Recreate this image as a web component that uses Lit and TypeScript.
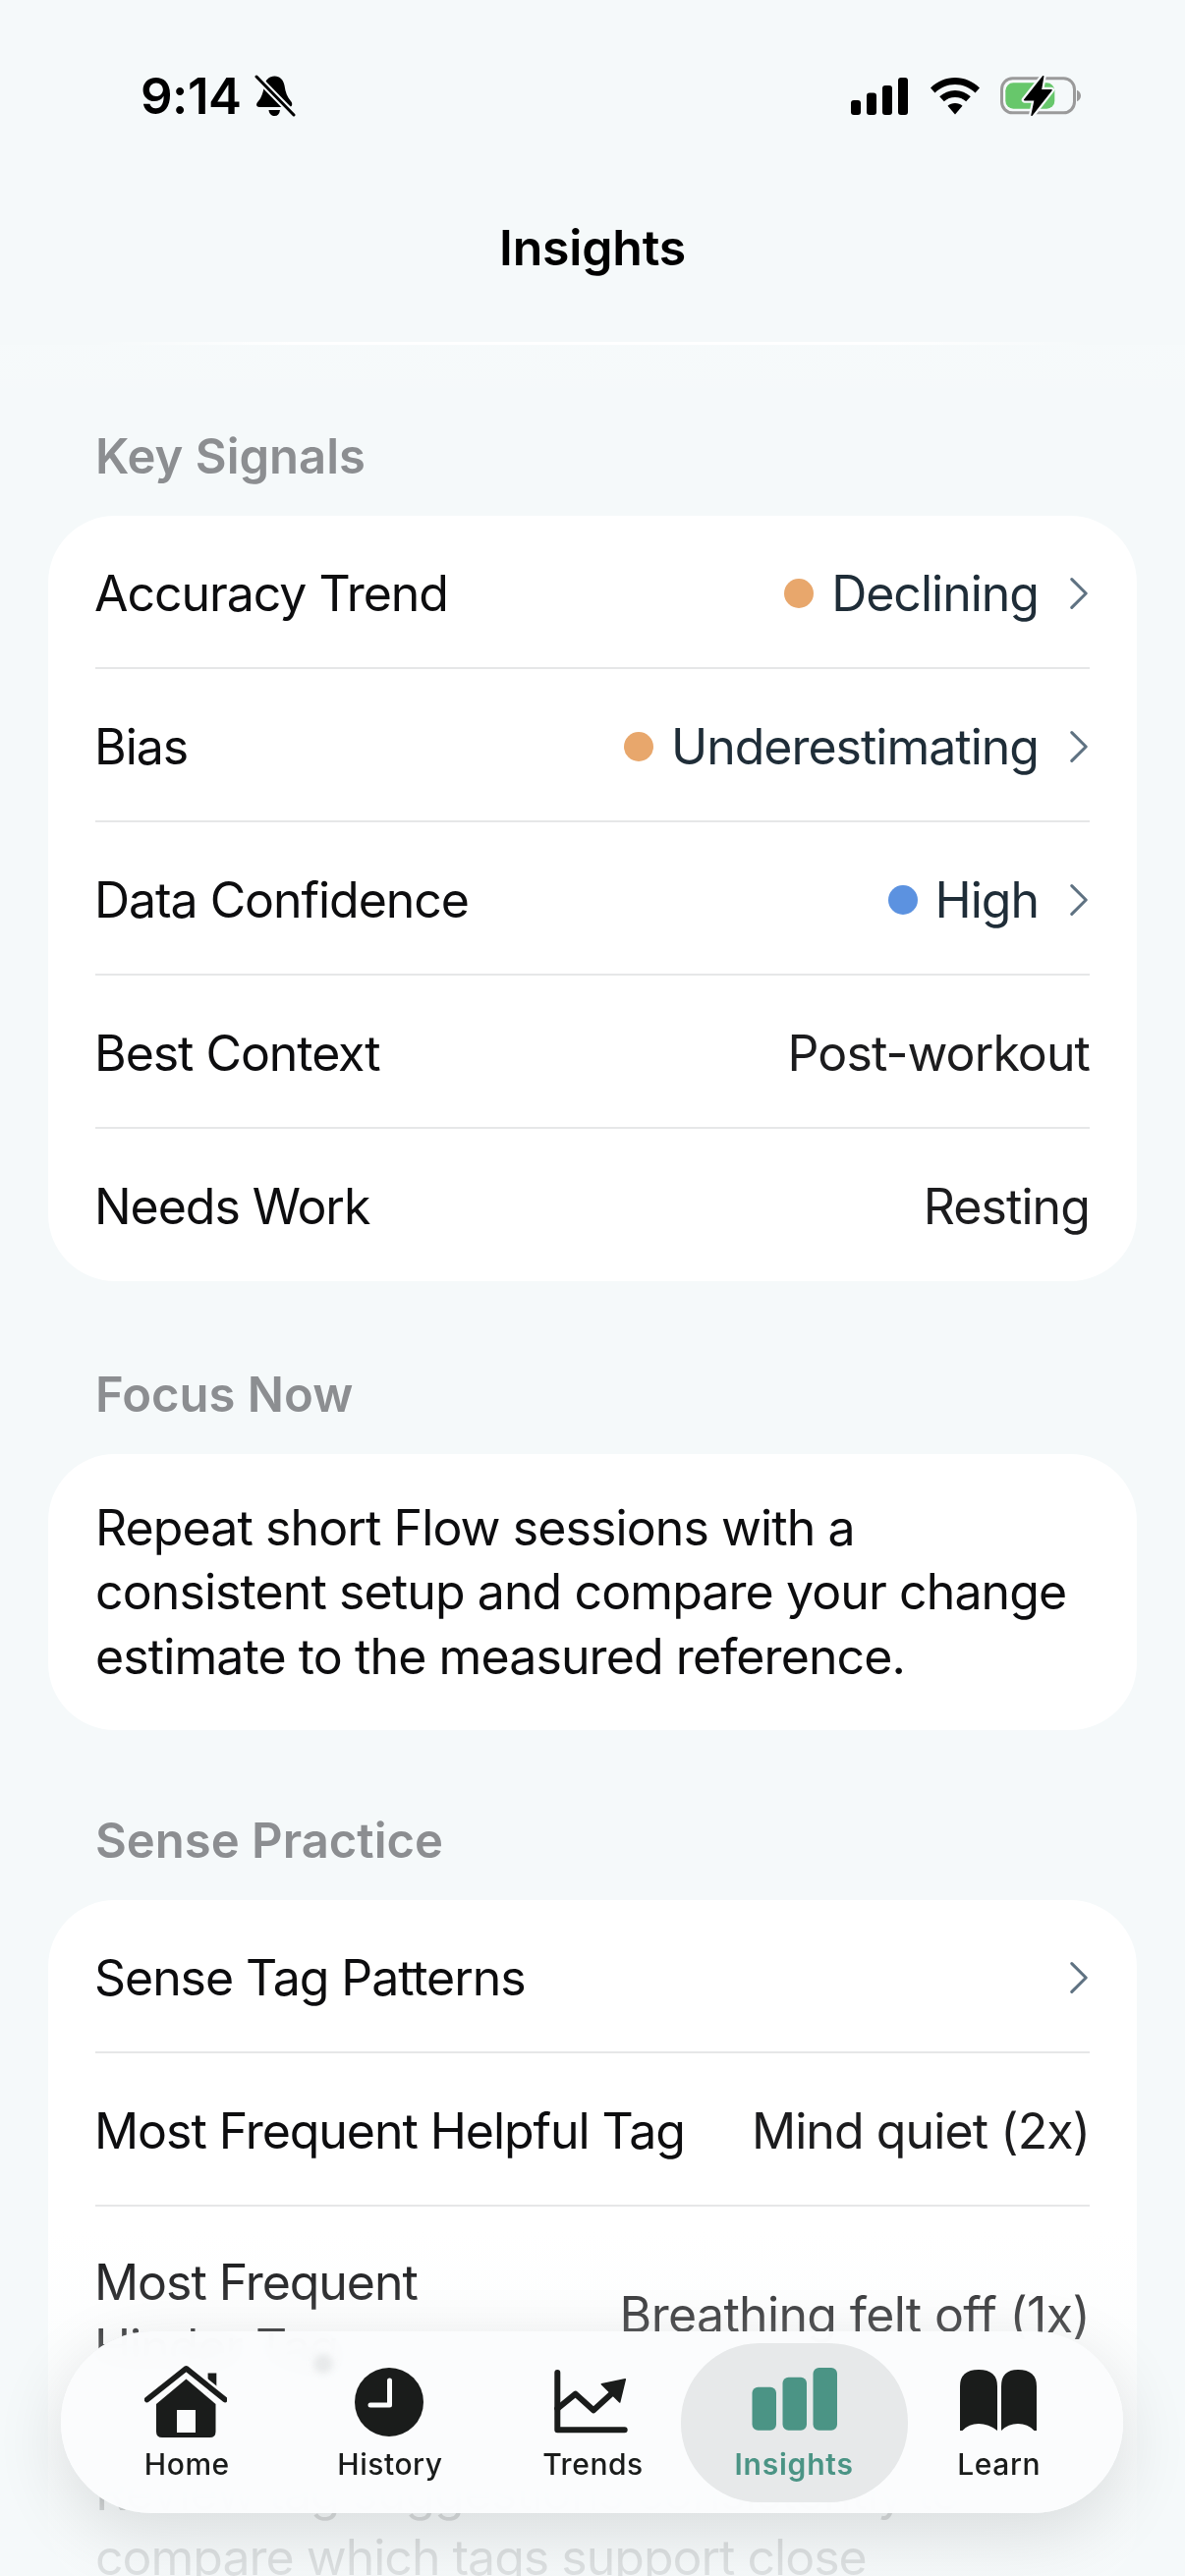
import { LitElement, html, css, svg } from "lit";
import { customElement } from "lit/decorators.js";

const chevron = html`<svg class="chev" viewBox="0 0 20 36"><path d="M2 2 L18 18 L2 34" fill="none" stroke="#5f7282" stroke-width="3.4" stroke-linecap="round" stroke-linejoin="round"/></svg>`;

type Row = { label: string; value?: string; dot?: string; chev?: boolean; cls?: string };

const keySignals: Row[] = [
  { label: "Accuracy Trend", value: "Declining", dot: "orange", chev: true },
  { label: "Bias", value: "Underestimating", dot: "orange", chev: true },
  { label: "Data Confidence", value: "High", dot: "blue", chev: true },
  { label: "Best Context", value: "Post-workout" },
  { label: "Needs Work", value: "Resting" },
];
const sense: Row[] = [
  { label: "Sense Tag Patterns", chev: true },
  { label: "Most Frequent Helpful Tag", value: "Mind quiet (2x)" },
  { label: "Most Frequent Hinder Tag", value: "Breathing felt off (1x)", cls: "tall" },
];

const homeIcon = svg`<svg class="ic" width="84" height="76" viewBox="0 0 84 76">
  <path d="M64.6 8.5h8.7v20h-8.7z" fill="#1a1c1b"/>
  <path d="M12 40 L42.5 14.5 L72.5 40 V68 Q72.5 74 66.5 74 H18 Q12 74 12 68 Z" fill="#1a1c1b"/>
  <path d="M2.6 35.5 L42.5 3.8 L82 35.5" fill="none" stroke="#fbfcfd" stroke-width="11" stroke-linecap="round" stroke-linejoin="round"/>
  <path d="M2.6 35.5 L42.5 3.8 L82 35.5" fill="none" stroke="#1a1c1b" stroke-width="5.6" stroke-linecap="round" stroke-linejoin="round"/>
  <path d="M33 46 H52 V69 H33 Z" fill="#fbfcfd"/>
</svg>`;
const historyIcon = svg`<svg class="ic" width="76" height="76" viewBox="0 0 76 76">
  <circle cx="38" cy="38" r="35" fill="#1a1c1b"/>
  <path d="M38.5 16 V41 H19" fill="none" stroke="#fbfcfd" stroke-width="5" stroke-linecap="round" stroke-linejoin="round"/>
</svg>`;
const trendsIcon = svg`<svg class="ic" width="80" height="76" viewBox="0 0 80 76">
  <path d="M5.3 8 V66.3 H73.7" fill="none" stroke="#1a1c1b" stroke-width="6" stroke-linecap="round" stroke-linejoin="round"/>
  <path d="M5.3 44.7 L23.7 29.7 L42 46.3 L62 28" fill="none" stroke="#1a1c1b" stroke-width="6" stroke-linecap="round" stroke-linejoin="round"/>
  <path d="M50.3 19.7 L74.3 14.7 L68.7 38 Z" fill="#1a1c1b" stroke="#1a1c1b" stroke-width="1.5" stroke-linejoin="round"/>
</svg>`;
const insightsIcon = svg`<svg class="ic" width="88" height="76" viewBox="0 0 88 76">
  <rect x="0.5" y="22.7" width="24.5" height="44" rx="6" fill="#4b9485"/>
  <rect x="31.5" y="12.7" width="24.5" height="54" rx="6" fill="#4b9485"/>
  <rect x="62.5" y="3" width="24.5" height="63.7" rx="6" fill="#4b9485"/>
</svg>`;
const learnIcon = svg`<svg class="ic" width="80" height="76" viewBox="0 0 80 76">
  <path d="M1 67 V22 Q1 5 20 5 Q39 5 39 22 V67 Q30 60 20 60 Q10 60 3.5 67 Q1 67 1 67 Z" fill="#1a1c1b"/>
  <path d="M79 67 V22 Q79 5 60 5 Q43 5 43 22 V67 Q50 60 60 60 Q70 60 76.5 67 Q79 67 79 67 Z" fill="#1a1c1b"/>
</svg>`;

const tabs = [
  { label: "Home", icon: homeIcon },
  { label: "History", icon: historyIcon },
  { label: "Trends", icon: trendsIcon },
  { label: "Insights", icon: insightsIcon, active: true },
  { label: "Learn", icon: learnIcon },
];

@customElement("app-root")
export class AppRoot extends LitElement {
  static styles = css`
    :host {
      display: block;
      width: 1206px;
      height: 2622px;
      font-family: "Inter", "Liberation Sans", sans-serif;
    }
    .screen {
      position: relative;
      width: 1206px;
      height: 2622px;
      overflow: hidden;
      background: #f5f9fa;
      color: #0d0d0f;
    }
    .status {
      display: flex;
      justify-content: space-between;
      align-items: center;
      height: 46px;
      padding: 75px 106px 0 143px;
    }
    .status-left { display: flex; align-items: center; gap: 14px; }
    .time { font-size: 51px; font-weight: 600; line-height: 46px; color: #000; letter-spacing: -0.5px; }
    .status-right { display: flex; align-items: center; gap: 21px; }
    .status svg { display: block; }
    .title {
      margin-top: 101px;
      text-align: center;
      font-size: 50px;
      font-weight: 600;
      line-height: 60px;
      color: #000;
      letter-spacing: -0.2px;
    }
    .glow {
      margin: 66px auto 0;
      width: 1020px;
      height: 3px;
      background: linear-gradient(90deg, rgba(255,255,255,0), #fff 20%, #fff 80%, rgba(255,255,255,0));
    }
    .band {
      height: 54px;
      background: linear-gradient(180deg, rgba(255,255,255,.14), rgba(255,255,255,.08) 70%, rgba(255,255,255,0));
    }
    .content { padding: 0 49px; margin-top: 30px; }
    .label {
      padding-left: 48px;
      font-size: 49px;
      font-weight: 600;
      line-height: 60px;
      color: #8c8e91;
      margin-bottom: 30px;
    }
    .card {
      background: #fff;
      border-radius: 68px;
      margin-bottom: 85.5px;
    }
    .row {
      display: flex;
      align-items: center;
      justify-content: space-between;
      margin: 0 48px;
      padding-top: 3px;
      font-size: 50px;
      line-height: 66px;
      border-bottom: 2px solid #e6e7e8;
      box-sizing: border-box;
      height: 156px;
    }
    .row:last-child { border-bottom: none; height: 155px; }
    .row.tall { height: 218px; }
    .row-label { color: #0d0d0f; letter-spacing: -1.05px; margin-left: -1px; }
    .row.tall .row-label { width: 420px; }
    .value { display: flex; align-items: center; color: #1c1c1e; white-space: nowrap; letter-spacing: -0.9px; }
    .row.tall .value { letter-spacing: -0.65px; }
    .chevd { letter-spacing: -1px; }
    .chevd .txt { color: #1f2d38; }
    .dot { width: 30px; height: 30px; border-radius: 50%; margin-right: 18px; }
    .dot.orange { background: #e8a76c; }
    .dot.blue { background: #5c92e0; }
    .chev { width: 18px; height: 34px; margin-left: 32px; margin-right: 2px; display: block; }
    .focus {
      padding: 43px 48px 41.6px;
      margin-bottom: 83px;
      font-size: 50px;
      line-height: 65.8px;
      letter-spacing: -0.9px;
      color: #0d0d0f;
    }
    .para { margin: 40px 48px 0; font-size: 50px; line-height: 66px; letter-spacing: -1px; color: #0d0d0f; }
    .fade {
      position: absolute;
      left: 0; right: 0; bottom: 0;
      height: 352px;
      background: linear-gradient(180deg, rgba(245,249,250,0), rgba(245,249,250,.22) 25%, rgba(245,249,250,.87) 82%, rgba(245,249,250,.9));
      pointer-events: none;
    }
    nav {
      position: absolute;
      left: 62px;
      top: 2373px;
      width: 1081px;
      height: 185px;
      box-sizing: border-box;
      padding: 0 24px;
      border-radius: 92px;
      background: rgba(251,252,253,.96);
      backdrop-filter: blur(14px);
      box-shadow: 0 20px 70px rgba(0,0,0,.12);
      display: grid;
      grid-template-columns: repeat(5, 1fr);
    }
    .smudge {
      position: absolute;
      left: 257px; top: 23px;
      width: 20px; height: 20px;
      border-radius: 50%;
      background: #e8eaeb;
      filter: blur(3px);
    }
    .tab {
      position: relative;
      display: flex;
      flex-direction: column;
      align-items: center;
      font-size: 30px;
      font-weight: 500;
      letter-spacing: .55px;
      color: #1a1c1b;
    }
    .tab.active { color: #4b9485; font-weight: 600; letter-spacing: .8px; }
    .tab.active::before {
      content: "";
      position: absolute;
      left: -13px; right: -12px;
      top: 12px; bottom: 11px;
      border-radius: 80px;
      background: #e7e9ea;
    }
    .ic-wrap {
      position: relative;
      height: 76px;
      margin-top: 34px;
      display: flex;
      align-items: center;
      justify-content: center;
    }
    .ic { display: block; }
    .tab-label { position: relative; margin-top: 7px; line-height: 36px; padding-left: 2px; }
    .tab.active .tab-label { padding-left: 0; padding-right: 2px; }
  `;

  private renderRow(r: Row) {
    return html`<div class="row ${r.cls ?? ""}">
      <span class="row-label">${r.label}</span>
      ${r.value || r.chev
        ? html`<span class="value ${r.chev ? "chevd" : ""}">
            ${r.dot ? html`<span class="dot ${r.dot}"></span>` : ""}
            ${r.value ? html`<span class="txt">${r.value}</span>` : ""}
            ${r.chev ? chevron : ""}
          </span>`
        : ""}
    </div>`;
  }

  render() {
    return html`<div class="screen">
      <div class="status">
        <div class="status-left">
          <span class="time">9:14</span>
          <svg width="42" height="44" viewBox="0 0 42 44">
            <path d="M20.5 1.5 C26 1.5 29.5 5.5 30.5 11 C31.5 18 33.5 23 37 27 C39.5 30 38 33 35 33 H5 C2 33 1 30 3.5 27.5 C7 24 9 18 10 11 C11 5.5 15 1.5 20.5 1.5 Z" fill="#000"/>
            <path d="M14.5 36 H26 C25.5 40 23.5 42 20.5 42 C17.5 42 15 40 14.5 36 Z" fill="#000"/>
            <path d="M1 1 L41 42" stroke="#f5f9fa" stroke-width="7"/>
            <path d="M2 2 L40 41" stroke="#000" stroke-width="3" stroke-linecap="round"/>
          </svg>
        </div>
        <div class="status-right">
          <svg width="60" height="38" viewBox="0 0 60 38" fill="#000">
            <rect x="0" y="23" width="10" height="15" rx="3"/>
            <rect x="16" y="15.5" width="10" height="22.5" rx="3"/>
            <rect x="32" y="8" width="10" height="30" rx="3"/>
            <rect x="48" y="0" width="10" height="38" rx="3"/>
          </svg>
          <svg width="50" height="38" viewBox="0 0 50 38" fill="#000">
            <path d="M25 0 C34.500 0 43 3.800 50 10.500 L45.500 15.500 C40 10.200 32.800 7 25 7 C17.200 7 10 10.200 4.500 15.500 L0 10.500 C7 3.800 15.500 0 25 0 Z"/>
            <path d="M25 13 C31 13 36.500 15.300 40.800 19.300 L36.200 24.300 C33.200 21.500 29.300 20 25 20 C20.700 20 16.800 21.500 13.800 24.300 L9.200 19.300 C13.500 15.300 19 13 25 13 Z"/>
            <path d="M25 26 C28 26 30.500 27 32.500 28.800 L25 37.500 L17.500 28.800 C19.500 27 22 26 25 26 Z"/>
          </svg>
          <svg class="batt" width="82" height="44" viewBox="0 0 82 44">
            <rect x="1.500" y="3.800" width="74" height="35" rx="11" fill="none" stroke="#9a9a9a" stroke-width="3"/>
            <rect x="5.300" y="8.300" width="50" height="26.400" rx="8" fill="#67c76b"/>
            <path d="M78 15.700 C80.500 16.800 82 19 82 21.500 C82 24 80.500 26.200 78 27.300 Z" fill="#9a9a9a"/>
            <path d="M43.700 1.700 L24.700 25.700 H35.300 L32 41.300 L52 15.700 H41.300 Z" fill="#000" stroke="#f5f9fa" stroke-width="6" stroke-linejoin="round" paint-order="stroke"/>
            <path d="M43.700 1.700 L24.700 25.700 H35.300 L32 41.300 L52 15.700 H41.300 Z" fill="#000" stroke="#000" stroke-width="1.500" stroke-linejoin="round"/>
          </svg>
        </div>
      </div>
      <div class="title">Insights</div>
      <div class="glow"></div>
      <div class="band"></div>
      <div class="content">
        <div class="label">Key Signals</div>
        <div class="card">${keySignals.map((r) => this.renderRow(r))}</div>
        <div class="label">Focus Now</div>
        <div class="card focus">Repeat short Flow sessions with a consistent setup and compare your change estimate to the measured reference.</div>
        <div class="label">Sense Practice</div>
        <div class="card">
          ${sense.map((r) => this.renderRow(r))}
          <div class="para">Review tag suggestions consistently to compare which tags support close</div>
        </div>
      </div>
      <div class="fade"></div>
      <nav>
        <span class="smudge"></span>
        ${tabs.map(
          (t) => html`<div class="tab ${t.active ? "active" : ""}">
            <div class="ic-wrap">${t.icon}</div>
            <span class="tab-label">${t.label}</span>
          </div>`
        )}
      </nav>
    </div>`;
  }
}
